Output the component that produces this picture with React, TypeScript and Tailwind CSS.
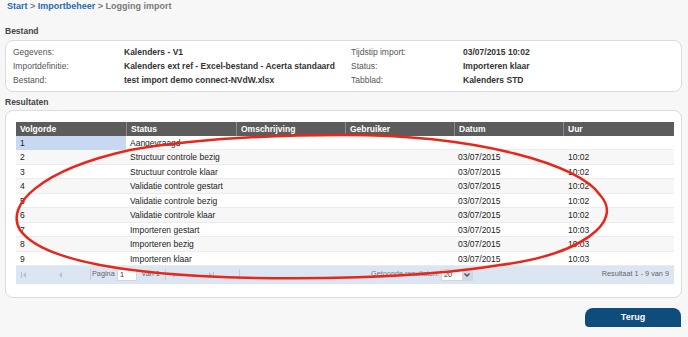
import React from 'react';

const FONT = { fontFamily: '"Liberation Sans", Arial, sans-serif' };

const info = [
  ['Gegevens:', 'Kalenders - V1', 'Tijdstip import:', '03/07/2015 10:02'],
  ['Importdefinitie:', 'Kalenders ext ref - Excel-bestand - Acerta standaard', 'Status:', 'Importeren klaar'],
  ['Bestand:', 'test import demo connect-NVdW.xlsx', 'Tabblad:', 'Kalenders STD'],
];

const rows = [
  ['1', 'Aangevraagd', '', ''],
  ['2', 'Structuur controle bezig', '03/07/2015', '10:02'],
  ['3', 'Structuur controle klaar', '03/07/2015', '10:02'],
  ['4', 'Validatie controle gestart', '03/07/2015', '10:02'],
  ['5', 'Validatie controle bezig', '03/07/2015', '10:02'],
  ['6', 'Validatie controle klaar', '03/07/2015', '10:02'],
  ['7', 'Importeren gestart', '03/07/2015', '10:03'],
  ['8', 'Importeren bezig', '03/07/2015', '10:03'],
  ['9', 'Importeren klaar', '03/07/2015', '10:03'],
];

const headers = ['Volgorde', 'Status', 'Omschrijving', 'Gebruiker', 'Datum', 'Uur'];
const cols = 'grid grid-cols-[110px_110px_109px_109px_109px_111px]';

function Arrow({ dir, bar }: { dir: 'l' | 'r'; bar?: boolean }) {
  return (
    <svg width="8" height="8" viewBox="0 0 8 8" className="text-[#b7bfca] shrink-0">
      {dir === 'l' ? (
        <>
          {bar && <rect x="1" y="1" width="1" height="6" fill="currentColor" />}
          <path d="M6 1 L3 4 L6 7 Z" fill="currentColor" />
        </>
      ) : (
        <>
          <path d="M2 1 L5 4 L2 7 Z" fill="currentColor" />
          {bar && <rect x="6" y="1" width="1" height="6" fill="currentColor" />}
        </>
      )}
    </svg>
  );
}

export default function App() {
  return (
    <div className="relative w-[688px] h-[337px] bg-[#f7f7f7] overflow-hidden text-[8.5px]" style={FONT}>
      {/* breadcrumb */}
      <div className="h-[12px] leading-[12px] pl-[7px] text-[9px] font-bold text-[#7a7a7a]">
        <span className="text-[#1f6cb0]">Start</span> &gt; <span className="text-[#1f6cb0]">Importbeheer</span> &gt; Logging import
      </div>

      <div className="mt-[13px] h-[12px] leading-[12px] pl-[5px] font-bold text-[#444]">Bestand</div>
      <div className="mt-[3px] ml-[5px] w-[677px] bg-white border border-[#dcdcdc] rounded-[8px] pt-[4px] pb-[4px] pl-[7px]">
        {info.map(([l1, v1, l2, v2]) => (
          <div key={l1} className="grid grid-cols-[111px_227px_112px_1fr] h-[14px] leading-[14px]">
            <span className="text-[#555]">{l1}</span>
            <span className="font-bold text-[#333]">{v1}</span>
            <span className="text-[#555]">{l2}</span>
            <span className="font-bold text-[#333]">{v2}</span>
          </div>
        ))}
      </div>

      <div className="mt-[4px] h-[12px] leading-[12px] pl-[5px] font-bold text-[#444]">Resultaten</div>
      <div className="mt-[2px] ml-[5px] w-[677px] bg-white border border-[#dcdcdc] rounded-[8px] pt-[11px] pb-[13px] pl-[10px] pr-[7px]">
        <div className="w-[658px]">
          <div className={`${cols} h-[14px] leading-[14px] bg-[#5c5c5c] text-white font-bold`}>
            {headers.map((h, i) => (
              <div key={h} className={`pl-[4px] ${i > 0 ? 'border-l border-[#8a8a8a]' : ''}`}>{h}</div>
            ))}
          </div>
          {rows.map(([n, s, d, u], i) => (
            <div
              key={n}
              className={`${cols} h-[14.44px] leading-[14px] text-[#222] border-b border-[#ececec] ${i % 2 === 1 ? 'bg-[#f7f7f7]' : 'bg-white'}`}
            >
              <div className={`pl-[4px] ${i === 0 ? 'bg-[#c6d9f0]' : ''}`}>{n}</div>
              <div className="pl-[4px]">{s}</div>
              <div />
              <div />
              <div className="pl-[4px]">{d}</div>
              <div className="pl-[5px]">{u}</div>
            </div>
          ))}
          {/* pager */}
          <div className="h-[18px] bg-[#dce6f2] flex items-center text-[#666] text-[7.3px] whitespace-nowrap">
            <div className="w-[4px] shrink-0" />
            <Arrow dir="l" bar />
            <div className="ml-[28px]"><Arrow dir="l" /></div>
            <div className="ml-[26px] w-px h-[11px] bg-[#c4cdd8] shrink-0" />
            <span className="ml-[1px] w-[25px] shrink-0">Pagina</span>
            <div className="w-[20px] h-[12px] bg-white border border-[#d0d7e0] leading-[10px] pl-[2px] text-[#333] shrink-0">1</div>
            <span className="ml-[5px] w-[23px] shrink-0">van 1</span>
            <div className="w-px h-[11px] bg-[#c4cdd8] shrink-0" />
            <div className="ml-[5px]"><Arrow dir="r" /></div>
            <div className="ml-[28px]"><Arrow dir="r" bar /></div>
            <div className="ml-[24px] w-px h-[11px] bg-[#c4cdd8] shrink-0" />
            <span className="ml-[131px] w-[70px] shrink-0 text-[#777]">Getoonde resultaten:</span>
            <div className="w-[32px] h-[12px] bg-white border border-[#d0d7e0] flex items-center shrink-0">
              <span className="pl-[2px] flex-1 text-[#333] leading-[10px]">20</span>
              <div className="w-[10px] h-full bg-[#d4d8de] flex items-center justify-center">
                <svg width="6" height="4" viewBox="0 0 6 4"><path d="M0.5 0.5 L3 3 L5.5 0.5" stroke="#2d4f7c" strokeWidth="1.3" fill="none" /></svg>
              </div>
            </div>
            <span className="ml-auto mr-[5px] text-[#666]">Resultaat 1 - 9 van 9</span>
          </div>
        </div>
      </div>

      <div className="mt-[10px] flex justify-end pr-[7px]">
        <button className="w-[96px] h-[19px] bg-[#0e4c7b] text-white font-bold text-[9px] rounded-tl-[8px] rounded-tr-[8px] rounded-bl-[4px]">
          Terug
        </button>
      </div>

      {/* hand-drawn annotation */}
      <svg className="absolute inset-0 pointer-events-none" width="688" height="337" viewBox="0 0 688 337">
        <path
          d="M 344 135 C 480 135, 580 165, 600 195 C 625 222, 580 255, 500 265 C 420 278, 300 281, 200 276 C 110 271, 40 258, 20 230 C 5 205, 40 170, 130 150 C 200 138, 280 135, 344 135 Z"
          fill="none"
          stroke="#e8261a"
          strokeWidth="2.5"
        />
      </svg>
    </div>
  );
}
